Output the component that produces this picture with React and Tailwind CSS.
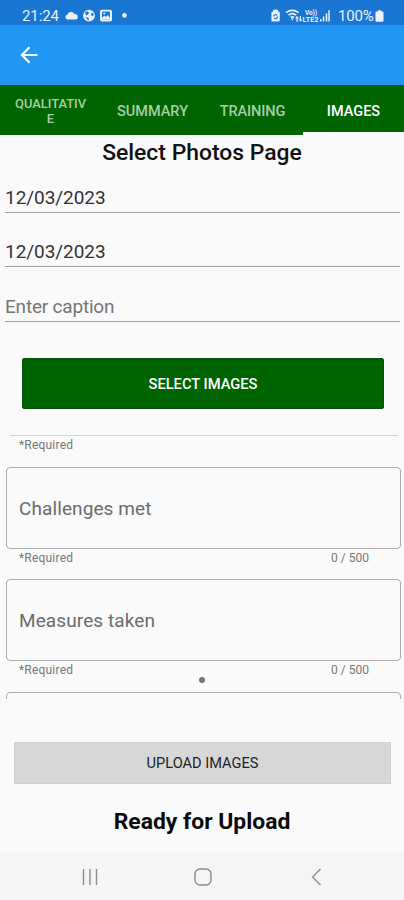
import React from "react";

function StatusBar() {
  return (
    <header className="flex h-[25px] shrink-0 items-center bg-[#1976d2] pl-[22px] pr-[20px] pt-[6px] text-[#e8f3fd]">
      <span className="w-[38px] whitespace-nowrap text-[15px] leading-[18px] tracking-[-0.100px]">21:24</span>
      <svg className="ml-[4px] h-[14px] w-[66px] shrink-0" viewBox="0 0 66 14" fill="currentColor">
        <path d="M3.500 10.500a2.400 2.400 0 0 1-.2-4.700A3.900 3.900 0 0 1 10.400 5a2.800 2.800 0 0 1 1.100 5.500Z" />
        <circle cx="25" cy="6.600" r="5.900" />
        <g fill="#1976d2">
          <path d="M21 3.500l2.400-1.200 1.700 1.500-1.200 1.700-1.800 1Z" />
          <path d="M27 4.500l2.300-.7.300 2.800-1.900.7Z" />
          <path d="M21.400 8.200l2.600.2 1.200 1.600-1 1.600Z" />
        </g>
        <rect x="36" y=".8" width="12" height="11.700" rx="2" />
        <rect x="38" y="2.600" width="8" height="8" rx=".8" fill="#1976d2" />
        <path d="M38 9l2.200-2.500 1.800 1.500 1.700-2 2.300 3v1.600h-8Z" />
        <circle cx="40.300" cy="4.600" r="1" />
        <circle cx="60.500" cy="6.400" r="2.300" />
      </svg>
      <span className="grow" />
      <svg className="h-[14px] w-[62px] shrink-0" viewBox="0 0 62 14" fill="currentColor">
        <path d="M3 1.500Q3 .5 5.600.5T8.300 1.500v1l1.500.8v8Q9.800 12.600 8.500 12.600H2.700Q1.400 12.600 1.400 11.300v-8L3 2.500Z" />
        <path d="M3.600 7.500a2 2 0 0 1 3.500-1.200M7.600 7.600A2 2 0 0 1 4.200 9" fill="none" stroke="#1976d2" strokeWidth="1.100" />
        <g fill="none" stroke="currentColor" strokeWidth="1.700">
          <path d="M16 3.600Q22.300-.9 28.600 3.600" />
          <path d="M18.600 6.100Q22.300 3.200 26.100 6.100" />
          <path d="M20.700 8.500Q22.300 7.200 24 8.500" />
        </g>
        <path d="M22.300 11.500l-1.500-2h3ZM27 7l2 2.200h-1.300v3.500h-1.300V9.200H25Zm3.500 5.700-2-2.200h1.300V7H31v3.500h1.300Z" />
        <text x="35" y="6" fontSize="6.500" fontWeight="700" textLength="12">Vo))</text>
        <text x="32.500" y="12.600" fontSize="7" fontWeight="700" textLength="16">LTE2</text>
        <path d="M50 10h1.500v2.500H50Zm2.800-2.500h1.500v5h-1.500Z" />
        <path d="M55.700 4.500h1.600v8h-1.600Zm2.600-3.300h1.500v11.300h-1.500Z" />
      </svg>
      <span className="ml-[6px] w-[36px] whitespace-nowrap text-[15px] leading-[18px] tracking-[-0.200px]">100%</span>
      <svg className="ml-px h-[12px] w-[9px] shrink-0" viewBox="0 0 9 12" fill="currentColor">
        <path d="M2.800.2h3.400v1.300h1.300q1 0 1 1v8.300q0 1-1 1h-6q-1 0-1-1V2.500q0-1 1-1h1.300Z" />
      </svg>
    </header>
  );
}

function Tabs() {
  return (
    <nav className="grid h-[50px] shrink-0 grid-cols-4 bg-[#006400] text-[14.500px] font-medium text-[#a8cfa5]">
      <div className="flex items-center justify-center pt-px text-center text-[12.900px] leading-[15px]">
        <span>QUALITATIV<br />E</span>
      </div>
      <div className="flex items-center justify-center pl-[2px] pt-[4px]">SUMMARY</div>
      <div className="flex items-center justify-center pt-[4px] tracking-[-0.100px]">TRAINING</div>
      <div className="flex items-center justify-center border-b-[3px] border-[#fafafa] pt-[7px] text-white">IMAGES</div>
    </nav>
  );
}

function LineField({ text, hint }) {
  return (
    <div className={`ml-[5px] mr-[4px] flex h-[54.500px] shrink-0 items-end border-b border-[#a0a0a0] pb-[2px] text-[19px] leading-[24px] ${hint ? "text-[#757575]" : "text-[#333]"}`}>
      <span className={hint ? "tracking-[-0.200px]" : "tracking-[-0.050px]"}>{text}</span>
    </div>
  );
}

function NoteField({ label }) {
  return (
    <div className="shrink-0">
      <div className="ml-[6px] mr-[3px] flex h-[82px] items-center rounded-[4px] border border-[#ababab] pl-[12px] pt-[3px] text-[19px] text-[#6b6b6b]">
        <span className="tracking-[0.100px]">{label}</span>
      </div>
      <div className="flex h-[30.500px] justify-between pl-[19px] pr-[35px] text-[12px] leading-[18px] text-[#777]">
        <span className="tracking-[0.200px]">*Required</span>
        <span>0 / 500</span>
      </div>
    </div>
  );
}

function NavBar() {
  return (
    <footer className="flex h-[48px] shrink-0 items-center justify-between bg-[#f5f5f5] pl-[80px] pr-[78px] pt-px text-[#8c8c8c]">
      <svg className="h-5 w-5" viewBox="0 0 20 20" fill="none" stroke="currentColor" strokeWidth="1.400">
        <path d="M3.500 2v16M10 2v16M16.500 2v16" />
      </svg>
      <svg className="h-5 w-5" viewBox="0 0 20 20" fill="none" stroke="currentColor" strokeWidth="1.400">
        <rect x="2" y="2" width="16" height="16" rx="5" />
      </svg>
      <svg className="h-5 w-5" viewBox="0 0 20 20" fill="none" stroke="currentColor" strokeWidth="1.400">
        <path d="M14.500 2 6.500 10l8 8" />
      </svg>
    </footer>
  );
}

export default function App() {
  return (
    <div className="flex h-[900px] w-[404px] flex-col overflow-hidden bg-[#fafafa] font-['Roboto',sans-serif]">
      <StatusBar />
      <div className="flex h-[60px] shrink-0 items-center bg-[#2196f3] pl-[20px]">
        <svg className="h-[18px] w-[18px]" viewBox="0 0 18 18" fill="none" stroke="white" strokeWidth="2.200">
          <path d="M17.500 9H2.500M9.500 1.200 1.900 9l7.600 7.800" />
        </svg>
      </div>
      <Tabs />
      <main className="relative flex h-[564px] shrink-0 flex-col overflow-hidden">
        <h1 className="h-[23px] shrink-0 text-center text-[22.900px] font-medium leading-[35px] text-[#111]">Select Photos Page</h1>
        <LineField text="12/03/2023" />
        <LineField text="12/03/2023" />
        <LineField text="Enter caption" hint />
        <button className="ml-[22px] mr-[20px] mt-[36px] h-[51px] shrink-0 rounded-[2px] border border-[#00550a] bg-[#006400] pt-[2px] text-[14.700px] font-medium text-white">SELECT IMAGES</button>
        <div className="ml-[10px] mr-[6px] mt-[26.500px] h-px shrink-0 bg-[#d2d2d2]" />
        <div className="h-[30.500px] shrink-0 pl-[19px] text-[12px] leading-[19px] tracking-[0.200px] text-[#777]">*Required</div>
        <NoteField label="Challenges met" />
        <NoteField label="Measures taken" />
        <div className="ml-[6px] mr-[3px] h-[82px] shrink-0 rounded-[4px] border border-[#ababab]" />
        <span className="absolute left-[199px] top-[542px] h-[6px] w-[6px] rounded-full bg-[#757575]" />
      </main>
      <button className="ml-[14px] mr-[13px] mt-[43px] h-[42px] shrink-0 border border-[#cdd0cf] bg-[#d6d8d7] pt-[2px] text-[14.600px] text-[#222]">UPLOAD IMAGES</button>
      <h2 className="h-[68px] shrink-0 pt-[22px] text-center text-[22.900px] font-bold leading-[32px] text-[#0a0a0a]">Ready for Upload</h2>
      <NavBar />
    </div>
  );
}
